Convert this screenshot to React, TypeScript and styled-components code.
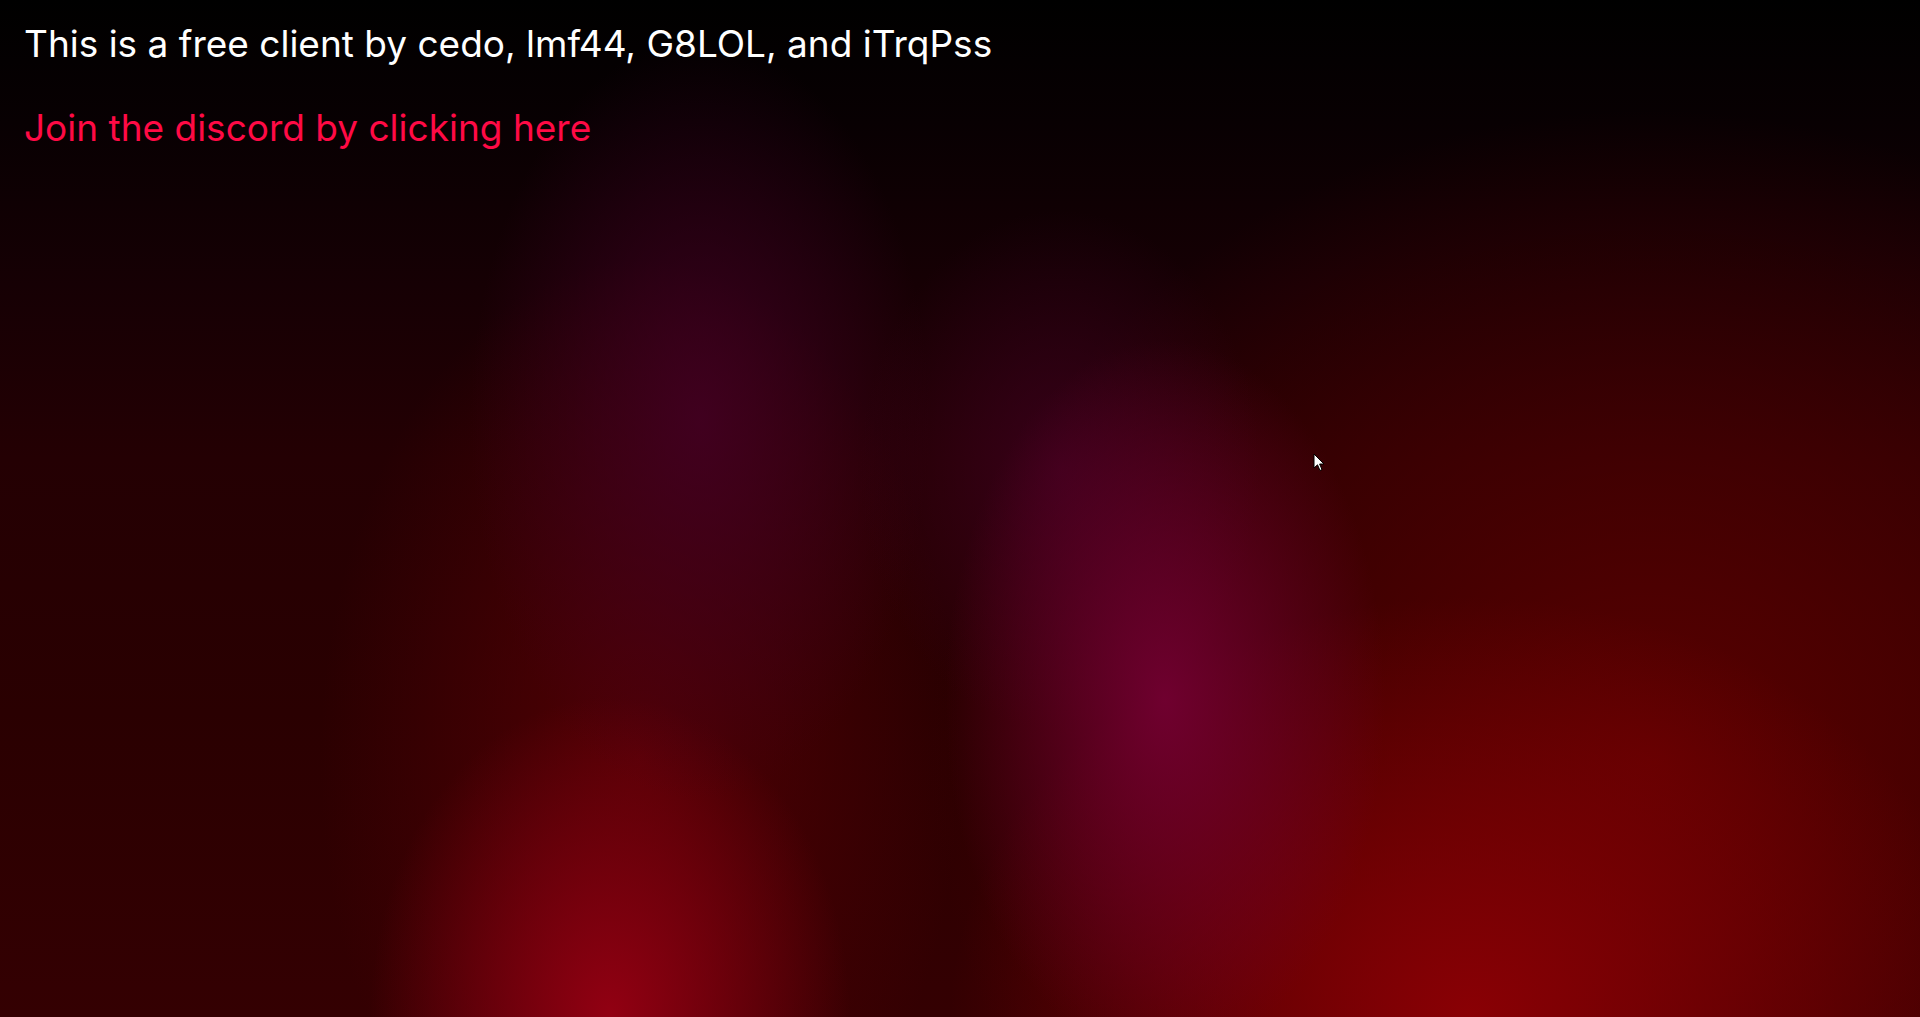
import React from "react";
import styled, { createGlobalStyle } from "styled-components";

const GlobalStyle = createGlobalStyle`
  html, body {
    margin: 0;
    padding: 0;
    height: 100%;
    background: #000;
  }
  #root {
    height: 100%;
  }
`;

export default function App() {
  return (
    <>
      <GlobalStyle />
      <Page>
        <Credits>This is a free client by cedo, lmf44, G8LOL, and iTrqPss</Credits>
        <DiscordLink href="#">Join the discord by clicking here</DiscordLink>
        <Cursor width="12" height="19" viewBox="0 0 12 19">
          <path d="M1 1 L1 15 L4.5 11.8 L7 17.5 L9 16.6 L6.6 11 L11 11 Z" fill="#fff" stroke="#000" strokeWidth="1" />
        </Cursor>
      </Page>
    </>
  );
}

// -------------------------- style --------------------------

const Page = styled.main`
  position: relative;
  overflow: hidden;
  display: flex;
  flex-direction: column;
  align-items: flex-start;
  gap: 40px;

  height: 100vh;
  box-sizing: border-box;
  padding: 22px 24px;

  font-family: Inter, "Open Sans", sans-serif;
  background-color: #000;
  background-image:
    radial-gradient(ellipse 220px 360px at 1165px 700px, rgba(120, 0, 55, 0.85), rgba(120, 0, 55, 0) 100%),
    radial-gradient(ellipse 200px 260px at 1060px 470px, rgba(70, 0, 40, 0.6), rgba(70, 0, 40, 0) 100%),
    radial-gradient(ellipse 230px 380px at 700px 420px, rgba(70, 0, 40, 0.75), rgba(70, 0, 40, 0) 100%),
    radial-gradient(ellipse 240px 320px at 610px 1017px, rgba(155, 0, 20, 0.9), rgba(155, 0, 20, 0) 100%),
    radial-gradient(ellipse 520px 420px at 1470px 1017px, rgba(145, 0, 5, 0.9), rgba(145, 0, 5, 0) 100%),
    radial-gradient(ellipse 720px 650px at 1650px 760px, rgba(95, 0, 0, 0.9), rgba(95, 0, 0, 0) 100%),
    radial-gradient(ellipse 320px 500px at 640px 760px, rgba(90, 0, 5, 0.8), rgba(90, 0, 5, 0) 100%),
    linear-gradient(180deg, #000 0%, #080002 12%, #160004 28%, #240003 45%, #2a0001 70%, #340002 100%);
`;

const Credits = styled.p`
  margin: 0;
  font-size: 37px;
  line-height: 44px;
  color: #ffffff;
`;

const DiscordLink = styled.a`
  font-size: 37px;
  line-height: 44px;
  color: #ff0a45;
  text-decoration: none;
`;

const Cursor = styled.svg`
  position: absolute;
  left: 1313px;
  top: 453px;
`;
